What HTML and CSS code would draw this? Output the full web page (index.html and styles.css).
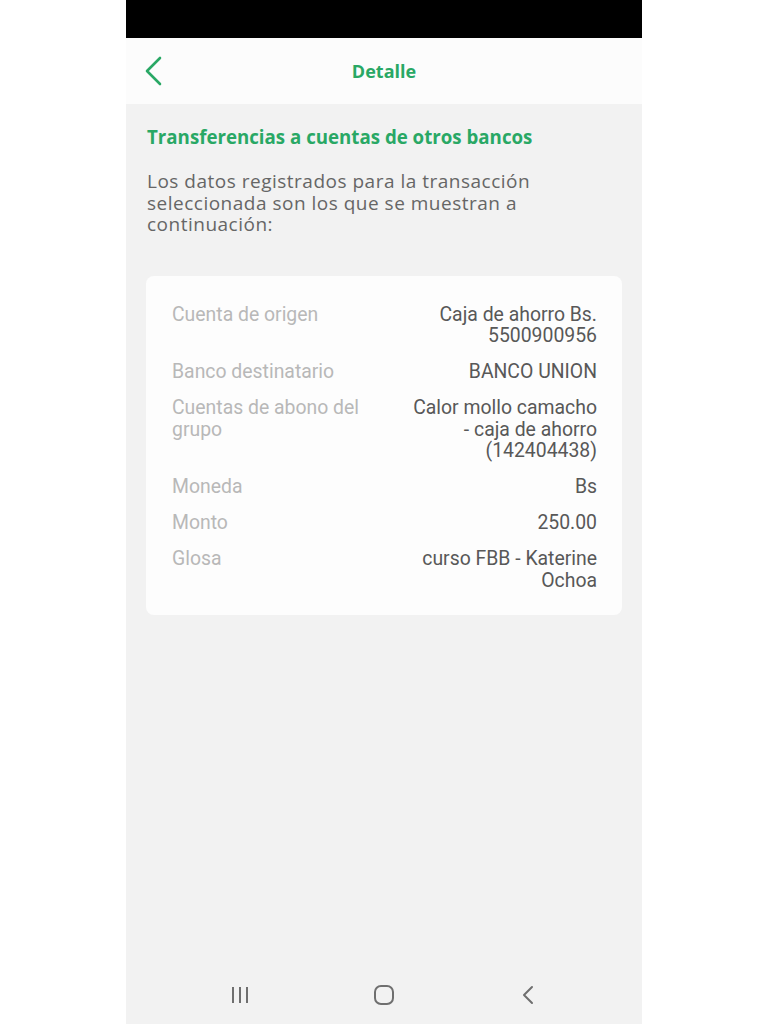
FILE: index.html
```html
<!DOCTYPE html>
<html lang="es">
<head>
    <meta charset="UTF-8">
    <meta name="viewport" content="width=device-width, initial-scale=1.0">
    <title>Detalle</title>
    <link rel="stylesheet" href="styles.css">
</head>
<body>

<div class="phone">
    <div class="status-bar"></div>

    <div class="header">
        <a class="back" href="#">
            <svg width="20" height="32" viewBox="0 0 20 32">
                <path d="M17 3 L4 16 L17 29" fill="none" stroke="#29a865" stroke-width="2.6" stroke-linecap="round" stroke-linejoin="round"/>
            </svg>
        </a>
        <h1>Detalle</h1>
    </div>

    <div class="content">
        <h2 class="title">Transferencias a cuentas de otros bancos</h2>
        <p class="intro">Los datos registrados para la transacción seleccionada son los que se muestran a continuación:</p>

        <div class="card">
            <div class="row">
                <span class="label">Cuenta de origen</span>
                <span class="value">Caja de ahorro Bs. 5500900956</span>
            </div>
            <div class="row">
                <span class="label">Banco destinatario</span>
                <span class="value">BANCO UNION</span>
            </div>
            <div class="row">
                <span class="label">Cuentas de abono del grupo</span>
                <span class="value">Calor mollo camacho -&#8288;&nbsp;caja de ahorro (142404438)</span>
            </div>
            <div class="row">
                <span class="label">Moneda</span>
                <span class="value">Bs</span>
            </div>
            <div class="row">
                <span class="label">Monto</span>
                <span class="value">250.00</span>
            </div>
            <div class="row">
                <span class="label">Glosa</span>
                <span class="value">curso FBB - Katerine Ochoa</span>
            </div>
        </div>
    </div>

    <div class="nav-bar">
        <svg width="20" height="20" viewBox="0 0 20 20">
            <path d="M3 2 V18 M10 2 V18 M17 2 V18" stroke="#6f6f6f" stroke-width="2"/>
        </svg>
        <svg width="22" height="22" viewBox="0 0 22 22">
            <rect x="2" y="2" width="18" height="18" rx="6" fill="none" stroke="#6f6f6f" stroke-width="2"/>
        </svg>
        <svg width="16" height="22" viewBox="0 0 16 22">
            <path d="M12 3 L4 11 L12 19" fill="none" stroke="#6f6f6f" stroke-width="2" stroke-linecap="round" stroke-linejoin="round"/>
        </svg>
    </div>
</div>

</body>
</html>
```

FILE: styles.css
```css
body {
    margin: 0;
    background: #fff;
    font-family: 'Open Sans', sans-serif;
}
.phone {
    width: 516px;
    height: 1024px;
    margin: 0 auto;
    background: #f2f2f2;
    display: flex;
    flex-direction: column;
}
.status-bar {
    height: 38px;
    background: #000;
}
.header {
    height: 66px;
    background: #fcfcfc;
    display: flex;
    align-items: center;
    justify-content: center;
    position: relative;
}
.header .back {
    position: absolute;
    left: 17px;
    top: 17px;
    display: block;
    width: 20px;
    height: 32px;
}
.header h1 {
    margin: 0;
    font-size: 18px;
    font-weight: 700;
    color: #29a865;
}
.content {
    flex: 1;
    padding: 0 20px 0 21px;
}
.title {
    margin: 20px 0 0;
    font-size: 18.7px;
    font-weight: 700;
    line-height: 26px;
    color: #29a865;
}
.intro {
    margin: 21px 0 0;
    font-size: 19px;
    line-height: 21.5px;
    letter-spacing: 0.5px;
    color: #666;
}
.card {
    margin: 40px 0 0 -1px;
    background: #fdfdfd;
    border-radius: 8px;
    padding: 28px 25px 24px 26px;
    display: flex;
    flex-direction: column;
    gap: 14.5px;
    font-family: 'Roboto', sans-serif;
    font-size: 19.4px;
    line-height: 21.5px;
}
.row {
    display: flex;
}
.label {
    width: 50%;
    color: #b8b8b8;
}
.value {
    width: 50%;
    text-align: right;
    color: #585858;
}
.nav-bar {
    height: 58px;
    display: grid;
    grid-template-columns: repeat(3, 144px);
    justify-content: center;
    justify-items: center;
    align-items: center;
}
```
